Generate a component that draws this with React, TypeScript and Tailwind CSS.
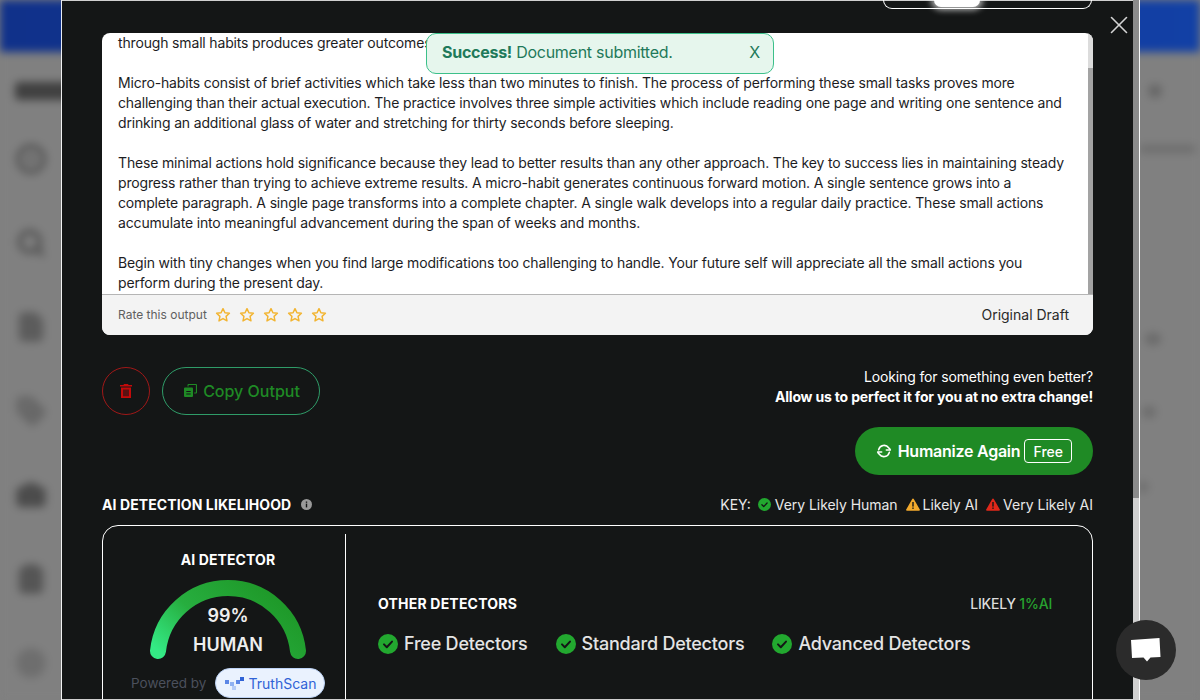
import { Camera, CircleDot, Clipboard, Circle, File, Search, Tag, X } from 'lucide-react'

const font = { fontFamily: 'Inter, "Noto Sans", sans-serif' }

function CheckCircle({ size }: { size: number }) {
  return (
    <svg width={size} height={size} viewBox="0 0 20 20" className="shrink-0" aria-hidden="true">
      <circle cx="10" cy="10" r="10" fill="#22a82f" />
      <path d="M6 10.400l2.800 2.800L14 7.600" fill="none" stroke="#141616" strokeWidth="2" strokeLinecap="round" strokeLinejoin="round" />
    </svg>
  )
}

function Warn({ color }: { color: string }) {
  return (
    <svg width="14" height="13" viewBox="0 0 14 13" className="shrink-0" aria-hidden="true">
      <path d="M7 .6a.9.9 0 0 1 .8.5l6 10.3a.9.9 0 0 1-.8 1.4H1a.9.9 0 0 1-.8-1.4l6-10.3A.9.9 0 0 1 7 .6z" fill={color} />
      <rect x="6.300" y="4" width="1.400" height="4.600" fill="#141616" />
      <rect x="6.300" y="9.500" width="1.400" height="1.400" fill="#141616" />
    </svg>
  )
}

function Star() {
  return (
    <svg width="16" height="16" viewBox="0 0 24 24" fill="none" stroke="#f2b431" strokeWidth="2.200" strokeLinejoin="round" aria-hidden="true">
      <path d="M12 2.500l2.900 6.200 6.700.8-5 4.600 1.400 6.700L12 17.400l-6 3.400 1.400-6.700-5-4.600 6.700-.8z" />
    </svg>
  )
}

function BlurredPage() {
  const blurredIcons = [
    { Icon: CircleDot, fill: 'none', color: '#505050' },
    { Icon: Search, fill: 'none', color: '#505050' },
    { Icon: File, fill: '#5c5c5c', color: '#5c5c5c' },
    { Icon: Tag, fill: '#686868', color: '#686868' },
    { Icon: Camera, fill: '#4c4c4c', color: '#4c4c4c' },
    { Icon: Clipboard, fill: '#555555', color: '#555555' },
    { Icon: Circle, fill: '#6e6e6e', color: '#6e6e6e' },
  ]
  return (
    <div className="h-[700px] w-[1200px] bg-[#808080] blur-[4px]">
      <div className="h-[52px] bg-gradient-to-r from-[#10318a] to-[#1240a5]" />
      <div className="flex justify-between">
        <div className="pl-[15px] pt-[30px]">
          <div className="h-[18px] w-[60px] rounded bg-[#404040]" />
          <div className="mt-[44px] flex flex-col items-start gap-[54px] pl-[1px]">
            {blurredIcons.map(({ Icon, fill, color }, i) => (
              <Icon key={i} size={30} strokeWidth={3.500} fill={fill} color={color} aria-hidden="true" />
            ))}
          </div>
        </div>
        <div className="flex w-[60px] flex-col items-start pt-[32px]">
          <div className="ml-[8px] size-[14px] rounded-full bg-[#666666]" />
          <div className="mt-[47px] h-[8px] w-[55px] bg-[#6d6d6d]" />
          <div className="mt-[180px] ml-[5px] h-[12px] w-[16px] rounded-full bg-[#6a6a6a]" />
          <div className="mt-[61px] ml-[2px] h-[12px] w-[14px] rounded-full bg-[#6c6c6c]" />
          <div className="mt-[63px] ml-[-2px] h-[12px] w-[10px] rounded-full bg-[#6e6e6e]" />
        </div>
      </div>
    </div>
  )
}

export default function App() {
  return (
    <div className="relative h-[700px] w-[1200px] overflow-hidden bg-[#808080] text-white" style={font}>
      <BlurredPage />

      <div className="absolute left-[61px] top-0 flex h-[700px] w-[1079px] border-l border-white/90">
        <div className="h-full w-[1071px] overflow-hidden border-y border-white/80 bg-[#141616] pl-[40px] pr-[40px] pt-[32px]">
          <div className="overflow-hidden rounded-lg bg-white">
            <div className="relative h-[262px] overflow-hidden border-b border-[#b5b5b5] pl-[16px] pr-[23px] text-[14px] leading-[20px] tracking-[-0.16px] text-[#1d1d1f]">
              <div className="absolute right-0 top-0 h-full w-[5px] bg-[#dcdcdc]">
                <div className="mt-[35px] h-[227px] bg-[#a3a3a3]" />
              </div>
              <p>through small habits produces greater outcomes than any sudden change.</p>
              <p className="mt-[20px]">
                Micro-habits consist of brief activities which take less than two minutes to finish. The process of performing these small tasks proves more challenging than their actual execution. The practice involves three simple activities which include reading one page and writing one sentence and drinking an additional glass of water and stretching for thirty seconds before sleeping.
              </p>
              <p className="mt-[20px]">
                These minimal actions hold significance because they lead to better results than any other approach. The key to success lies in maintaining steady progress rather than trying to achieve extreme results. A micro-habit generates continuous forward motion. A single sentence grows into a complete paragraph. A single page transforms into a complete chapter. A single walk develops into a regular daily practice. These small actions accumulate into meaningful advancement during the span of weeks and months.
              </p>
              <p className="mt-[20px]">
                Begin with tiny changes when you find large modifications too challenging to handle. Your future self will appreciate all the small actions you perform during the present day.
              </p>
            </div>
            <div className="flex h-[40px] items-center justify-between bg-[#f3f3f3] pl-[16px] pr-[24px]">
              <div className="flex items-center">
                <span className="text-[12px] text-[#5f5f5f]">Rate this output</span>
                <div className="ml-[8px] flex gap-[8px]">
                  {[0, 1, 2, 3, 4].map((i) => (
                    <Star key={i} />
                  ))}
                </div>
              </div>
              <span className="pb-[1px] text-[14px] text-[#2a2a2a]">Original Draft</span>
            </div>
          </div>

          <div className="mt-[32px] flex items-start justify-between">
            <div className="flex gap-[12px]">
              <button className="flex size-[48px] items-center justify-center rounded-full border border-[#a01818]">
                <svg width="12" height="14" viewBox="0 0 12 14" fill="#c40a0a" aria-hidden="true">
                  <path d="M4 0h4l.6 1H12v1.600H0V1h3.400zM1 3.600h10V14H1zM3.400 5.400v6.800h1.200V5.400zm2 0v6.800h1.200V5.400zm2 0v6.800h1.200V5.400z" fillRule="evenodd" />
                </svg>
              </button>
              <button className="flex h-[48px] w-[158px] items-center justify-center gap-[6px] rounded-full border border-[#2f9c68] pb-[1px] pl-[2px] text-[16px] font-medium text-[#1f8a25]">
                <svg width="13" height="13" viewBox="0 0 13 13" fill="#1f8a25" aria-hidden="true">
                  <path d="M0 4.500A1 1 0 0 1 1 3.500h7a1 1 0 0 1 1 1V12a1 1 0 0 1-1 1H1a1 1 0 0 1-1-1zM2.300 7v1h4.400V7zm0 2.400v1h4.400v-1z" fillRule="evenodd" />
                  <path d="M3.500 1a1 1 0 0 1 1-1H12a1 1 0 0 1 1 1v7.500a1 1 0 0 1-1 1h-1.800V8.400h1.700V1.100H4.600v1.400H3.500z" />
                </svg>
                Copy Output
              </button>
            </div>
            <div className="flex flex-col items-end">
              <p className="text-[14px] leading-[20px] tracking-[-0.15px]">Looking for something even better?</p>
              <p className="text-[14px] font-bold leading-[20px] tracking-[-0.18px]">Allow us to perfect it for you at no extra change!</p>
              <button className="mt-[20px] flex h-[48px] w-[238px] items-center justify-center rounded-full bg-[#1f8a25] text-[16px] font-semibold">
                <svg width="16" height="16" viewBox="0 0 24 24" fill="none" stroke="#fff" strokeWidth="2.400" strokeLinecap="round" strokeLinejoin="round" aria-hidden="true">
                  <path d="M4 10a8.500 8.500 0 0 1 15-3l2 2.500" />
                  <path d="M15.500 10.500h6" />
                  <path d="M20 14a8.500 8.500 0 0 1-15 3l-2-2.500" />
                  <path d="M2.500 13.500h6" />
                </svg>
                <span className="ml-[6px] pb-[1px] tracking-[-0.25px]">Humanize Again</span>
                <span className="ml-[4px] flex h-[24px] w-[48px] items-center justify-center rounded-[4px] border border-white text-[14px] font-medium">Free</span>
              </button>
            </div>
          </div>

          <div className="mt-[19px] flex h-[20px] items-center justify-between">
            <div className="flex items-center gap-[10px]">
              <h2 className="text-[14px] font-bold tracking-[0.1px]">AI DETECTION LIKELIHOOD</h2>
              <svg width="11" height="11" viewBox="0 0 11 11" aria-hidden="true">
                <circle cx="5.500" cy="5.500" r="5.500" fill="#9a9a9a" />
                <rect x="4.800" y="4.600" width="1.400" height="3.800" fill="#141616" />
                <rect x="4.800" y="2.500" width="1.400" height="1.300" fill="#141616" />
              </svg>
            </div>
            <div className="flex items-center text-[14px] text-[#e8e8e8]">
              <span className="mr-[7px]">KEY:</span>
              <CheckCircle size={13} />
              <span className="ml-[4px] tracking-[-0.05px]">Very Likely Human</span>
              <span className="ml-[8px]"><Warn color="#f2a92c" /></span>
              <span className="ml-[3px]">Likely AI</span>
              <span className="ml-[8px]"><Warn color="#e0281a" /></span>
              <span className="ml-[3px]">Very Likely AI</span>
            </div>
          </div>

          <div className="mt-[11px] flex h-[220px] rounded-t-[16px] border border-white pt-[8px]">
            <div className="flex h-[200px] w-[243px] flex-col items-center border-r border-white pl-[8px] pt-[16px]">
              <h3 className="text-[14px] font-bold leading-[20px] tracking-[0.1px]">AI DETECTOR</h3>
              <div className="relative h-[92px] w-[160px]">
                <svg width="160" height="92" viewBox="0 0 160 92" aria-hidden="true">
                  <defs>
                    <linearGradient id="gauge" x1="0" y1="1" x2="1" y2="0.5">
                      <stop offset="0" stopColor="#34ea85" />
                      <stop offset="0.45" stopColor="#27ae3f" />
                      <stop offset="1" stopColor="#1f9a2a" />
                    </linearGradient>
                  </defs>
                  <path d="M10 81A70.400 70.400 0 0 1 150 81" fill="none" stroke="url(#gauge)" strokeWidth="16" strokeLinecap="round" />
                </svg>
                <div className="absolute inset-x-0 top-[31px] text-center text-[18px] font-semibold leading-[29px] text-[#eeeeee]">
                  <div>99%</div>
                  <div>HUMAN</div>
                </div>
              </div>
              <div className="mt-[6px] flex w-full items-center pl-[20px]">
                <span className="text-[13.500px] text-[#4b505c]">Powered by</span>
                <div className="ml-[9px] flex h-[30px] w-[110px] items-center justify-center gap-[5px] rounded-full border border-[#bcd2f5] bg-[#eaf2fe] text-[14px] text-[#2f62d6]">
                  <svg width="19" height="13" viewBox="0 0 19 13" aria-hidden="true">
                    <rect x="0" y="3" width="4" height="4" fill="#5b86e6" />
                    <rect x="5" y="5" width="4" height="4" fill="#8fb1f2" />
                    <rect x="7" y="9" width="4" height="4" fill="#b4cbf7" />
                    <rect x="11" y="3" width="4" height="4" fill="#5b86e6" />
                    <rect x="15" y="0" width="4" height="4" fill="#2f62d6" />
                  </svg>
                  TruthScan
                </div>
              </div>
            </div>
            <div className="flex-1 pl-[32px] pr-[40px] pt-[59px]">
              <div className="flex h-[20px] items-center justify-between">
                <h3 className="text-[14px] font-bold tracking-[0.2px]">OTHER DETECTORS</h3>
                <span className="text-[14px] font-medium tracking-[-0.2px] text-[#dddddd]">
                  LIKELY <span className="text-[#27a32f]">1%AI</span>
                </span>
              </div>
              <div className="mt-[17px] flex gap-[28px] text-[18px] font-medium tracking-[-0.22px] text-[#e4e4e4]">
                {['Free Detectors', 'Standard Detectors', 'Advanced Detectors'].map((d) => (
                  <div key={d} className="flex items-center gap-[6px]">
                    <CheckCircle size={20} />
                    {d}
                  </div>
                ))}
              </div>
            </div>
          </div>
        </div>
        <div className="h-full w-[7px] border-r border-white/90 bg-[#cfcfcf]">
          <div className="h-[498px] bg-[#8b8b8b]" />
        </div>

        <button className="absolute left-[1042px] top-[10px] text-[#d4d4d4]" aria-label="Close">
          <X size={30} strokeWidth={1.300} />
        </button>

        <div className="absolute left-[821px] top-0 h-[9px] w-[209px] rounded-b-[12px] border border-t-0 border-white pl-[50px]">
          <div className="h-[7px] w-[46px] rounded-b-full bg-white shadow-[0_0_6px_3px_rgba(255,255,255,0.7)]" />
        </div>
      </div>

      <div className="absolute left-[426px] top-[33px] flex h-[41px] w-[348px] items-center justify-between rounded-[10px] border border-[#3cc08a] bg-[#e6f6ed] pb-[3px] pl-[15px] pr-[13px] text-[16px] tracking-[-0.27px] text-[#1f7a5a]">
        <span>
          <b className="font-bold">Success!</b> Document submitted.
        </span>
        <span>X</span>
      </div>

      <div className="absolute left-[1116px] top-[620px] flex size-[60px] items-center justify-center rounded-full bg-[#2b2b2b]">
        <svg width="30" height="24" viewBox="0 0 30 24" fill="#fff" aria-hidden="true">
          <path d="M0 2L28.500 0l1 19-10 .500-3.500 4-3.500-4-11.500.500z" />
        </svg>
      </div>
    </div>
  )
}
